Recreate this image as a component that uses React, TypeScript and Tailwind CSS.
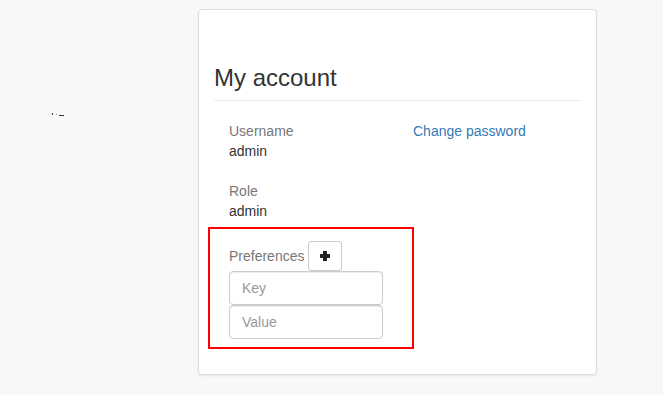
// Account page: left gutter + "My account" panel
export default function App() {
  return (
    <div className="flex min-h-[395px] w-full bg-[#f8f8f8] font-['Liberation_Sans',Arial,sans-serif] text-[14px] leading-[20px] text-[#333]">
      {/* left gutter with the stray marks */}
      <div className="w-[198px] shrink-0 pt-[113px] pl-[52px]">
        <div className="flex items-start">
          <div className="h-[2px] w-[1px] bg-[#444]" />
          <div className="ml-[3px] mt-[1px] h-[1px] w-[1px] bg-[#999]" />
          <div className="ml-[2px] mt-[2px] h-[1px] w-[5px] bg-[#333]" />
        </div>
      </div>

      {/* panel */}
      <div className="mt-[9px] h-[366px] w-[399px] shrink-0 rounded-[4px] border border-[#ddd] bg-white px-[15px] pt-[55px] shadow-[0_1px_2px_rgba(0,0,0,0.08)]">
        <h3 className="border-b border-[#eee] pb-[9px] text-[24px] leading-[26.4px] font-normal text-[#333]">
          My account
        </h3>

        <div className="mt-[20px] flex">
          <div className="w-[199px] shrink-0 pl-[15px]">
            <div className="text-[#777]">Username</div>
            <div>admin</div>
            <div className="mt-[20px] text-[#777]">Role</div>
            <div>admin</div>
          </div>
          <div>
            <a className="text-[#337ab7]" href="#">
              Change password
            </a>
          </div>
        </div>

        {/* preferences block */}
        <div className="ml-[-6px] mt-[6px] w-[206px] border-2 border-[#f00] pb-[8px] pl-[19px] pt-[12px]">
          <div className="flex items-center">
            <span className="text-[#777]">Preferences</span>
            <button className="ml-[4px] flex h-[30px] w-[34px] items-center justify-center rounded-[3px] border border-[#ccc] bg-white">
              <svg width="10" height="10" viewBox="0 0 10 10">
                <rect x="3" y="0" width="4" height="10" fill="#222" />
                <rect x="0" y="3" width="10" height="4" fill="#222" />
              </svg>
            </button>
          </div>
          <input
            className="block h-[34px] w-[154px] rounded-[4px] border border-[#ccc] px-[12px] text-[14px] text-[#555] placeholder:text-[#999] shadow-[inset_0_1px_1px_rgba(0,0,0,0.075)] outline-none"
            placeholder="Key"
          />
          <input
            className="block h-[34px] w-[154px] rounded-[4px] border border-[#ccc] px-[12px] text-[14px] text-[#555] placeholder:text-[#999] shadow-[inset_0_1px_1px_rgba(0,0,0,0.075)] outline-none"
            placeholder="Value"
          />
        </div>
      </div>
    </div>
  );
}
